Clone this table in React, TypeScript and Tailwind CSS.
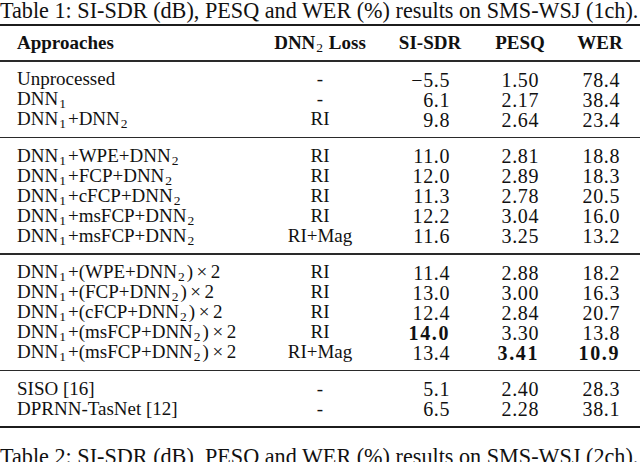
import React from 'react';

type Row = {
    label: string;
    loss: string;
    sdr: string;
    pesq: string;
    wer: string;
    bold?: string[];
};

const sections: Row[][] = [
    [
        { label: 'Unprocessed', loss: '-', sdr: '−5.5', pesq: '1.50', wer: '78.4' },
        { label: 'DNN_1', loss: '-', sdr: '6.1', pesq: '2.17', wer: '38.4' },
        { label: 'DNN_1+DNN_2', loss: 'RI', sdr: '9.8', pesq: '2.64', wer: '23.4' },
    ],
    [
        { label: 'DNN_1+WPE+DNN_2', loss: 'RI', sdr: '11.0', pesq: '2.81', wer: '18.8' },
        { label: 'DNN_1+FCP+DNN_2', loss: 'RI', sdr: '12.0', pesq: '2.89', wer: '18.3' },
        { label: 'DNN_1+cFCP+DNN_2', loss: 'RI', sdr: '11.3', pesq: '2.78', wer: '20.5' },
        { label: 'DNN_1+msFCP+DNN_2', loss: 'RI', sdr: '12.2', pesq: '3.04', wer: '16.0' },
        { label: 'DNN_1+msFCP+DNN_2', loss: 'RI+Mag', sdr: '11.6', pesq: '3.25', wer: '13.2' },
    ],
    [
        { label: 'DNN_1+(WPE+DNN_2)×2', loss: 'RI', sdr: '11.4', pesq: '2.88', wer: '18.2' },
        { label: 'DNN_1+(FCP+DNN_2)×2', loss: 'RI', sdr: '13.0', pesq: '3.00', wer: '16.3' },
        { label: 'DNN_1+(cFCP+DNN_2)×2', loss: 'RI', sdr: '12.4', pesq: '2.84', wer: '20.7' },
        { label: 'DNN_1+(msFCP+DNN_2)×2', loss: 'RI', sdr: '14.0', pesq: '3.30', wer: '13.8', bold: ['sdr'] },
        { label: 'DNN_1+(msFCP+DNN_2)×2', loss: 'RI+Mag', sdr: '13.4', pesq: '3.41', wer: '10.9', bold: ['pesq', 'wer'] },
    ],
    [
        { label: 'SISO [16]', loss: '-', sdr: '5.1', pesq: '2.40', wer: '28.3' },
        { label: 'DPRNN-TasNet [12]', loss: '-', sdr: '6.5', pesq: '2.28', wer: '38.1' },
    ],
];

// "DNN_1" -> DNN with a lowered small 1; "×" gets thin math spacing
const Label: React.FC<{ text: string }> = ({ text }) => {
    const parts = text.split(/(_\d|×)/);
    return (
        <>
            {parts.map((p, i) => {
                if (p.startsWith('_')) {
                    return (
                        <span key={i} className="relative top-[3px] ml-[1px] mr-[2px] text-[13.5px] leading-none">
                            {p.slice(1)}
                        </span>
                    );
                }
                if (p === '×') {
                    return (
                        <span key={i} className="mx-[3.5px]">
                            ×
                        </span>
                    );
                }
                return <span key={i}>{p}</span>;
            })}
        </>
    );
};

const Num: React.FC<{ v: string; bold?: boolean }> = ({ v, bold }) => (
    <span className={bold ? 'font-bold tracking-[1.6px]' : 'tracking-[0.6px]'}>{v}</span>
);

const Rule: React.FC<{ heavy?: boolean }> = ({ heavy }) => (
    <div className={heavy ? 'h-[2px] bg-[#1c1c1c]' : 'h-[1.5px] bg-[#2a2a2a]'} />
);

const App: React.FC = () => {
    return (
        <div className="w-[640px] h-[462px] overflow-hidden bg-white text-[#111] font-['Liberation_Serif',serif]">
            <div className="h-[24px] text-[22.2px] leading-[22px] whitespace-nowrap">
                Table 1: SI-SDR (dB), PESQ and WER (%) results on SMS-WSJ (1ch).
            </div>

            <Rule heavy />
            <div className="pt-[7px] pb-[7px]">
                <div className="flex h-[20px] items-center text-[19px] font-bold whitespace-nowrap">
                    <div className="w-[250px] pl-[17px]">Approaches</div>
                    <div className="w-[140px] text-center">
                        DNN<span className="relative top-[3px] text-[13.5px] leading-none font-normal mx-[1px]">2</span> Loss
                    </div>
                    <div className="w-[80px] text-center">SI-SDR</div>
                    <div className="w-[100px] text-center">PESQ</div>
                    <div className="w-[60px] text-center">WER</div>
                </div>
            </div>

            {sections.map((rows, si) => (
                <React.Fragment key={si}>
                    <Rule />
                    <div className="pt-[8px] pb-[7px]">
                        {rows.map((r, ri) => (
                            <div key={ri} className="flex h-[20px] items-center text-[19px] whitespace-nowrap">
                                <div className="w-[250px] pl-[17px]">
                                    <Label text={r.label} />
                                </div>
                                <div className="w-[140px] text-center">{r.loss}</div>
                                <div className="w-[80px] pr-[20px] text-right text-[20px]">
                                    <Num v={r.sdr} bold={r.bold?.includes('sdr')} />
                                </div>
                                <div className="w-[100px] pr-[31px] text-right text-[20px]">
                                    <Num v={r.pesq} bold={r.bold?.includes('pesq')} />
                                </div>
                                <div className="w-[60px] pr-[10px] text-right text-[20px]">
                                    <Num v={r.wer} bold={r.bold?.includes('wer')} />
                                </div>
                            </div>
                        ))}
                    </div>
                </React.Fragment>
            ))}
            <Rule heavy />

            <div className="mt-[18px] text-[22.2px] leading-[22px] whitespace-nowrap">
                Table 2: SI-SDR (dB), PESQ and WER (%) results on SMS-WSJ (2ch).
            </div>
        </div>
    );
};

export default App;
